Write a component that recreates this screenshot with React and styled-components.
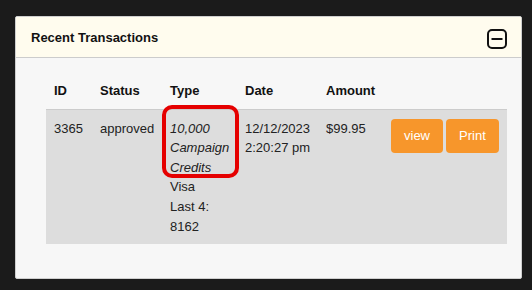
import React from "react";
import styled, { createGlobalStyle } from "styled-components";

const GlobalStyle = createGlobalStyle`
  html, body {
    margin: 0;
    padding: 0;
    background: #1b1b1b;
  }
  body {
    font-family: "Liberation Sans", Arial, sans-serif;
    font-size: 13px;
    color: #222;
  }
`;

const Page = styled.div`
  width: 532px;
  height: 290px;
  padding: 16px 10px 0 15px;
  box-sizing: border-box;
`;

const Panel = styled.section`
  width: 507px;
  height: 263px;
  box-sizing: border-box;
  background: #f7f7f7;
  border: 1px solid #cfcfcf;
  border-radius: 2px;
  overflow: hidden;
`;

const PanelHeader = styled.div`
  height: 40px;
  display: flex;
  align-items: center;
  justify-content: space-between;
  padding: 0 14px 0 15px;
  background: #fffcee;
  border-bottom: 1px solid #cccccc;
`;

const Title = styled.h3`
  margin: 0;
  font-size: 13px;
  font-weight: bold;
  color: #111;
`;

const Toggle = styled.button`
  width: 20px;
  height: 20px;
  margin-top: 4px;
  padding: 0;
  border: none;
  background: none;
  display: flex;
  cursor: pointer;
`;

const PanelBody = styled.div`
  padding: 15px 15px 0 15px;
`;

const Table = styled.table`
  margin-left: 15px;
  border-collapse: collapse;
  table-layout: fixed;
  width: 461px;
  line-height: 19.6px;

  th {
    text-align: left;
    font-weight: bold;
    padding: 8px 8px;
    color: #111;
  }
  td {
    vertical-align: top;
    padding: 9px 8px 8px;
    white-space: nowrap;
  }
  tbody tr {
    background: #dddddd;
    border-top: 1px solid #cccccc;
  }
`;

const Col = styled.col`
  width: ${(p) => p.$width}px;
`;

const Highlight = styled.span`
  position: relative;
  display: block;
  font-style: italic;

  &::after {
    content: "";
    position: absolute;
    top: -14px;
    left: -8px;
    right: -10px;
    bottom: -1px;
    border: 4px solid #e50000;
    border-radius: 10px;
    pointer-events: none;
  }
`;

const Actions = styled.div`
  display: flex;
  gap: 3px;
`;

const Button = styled.button`
  height: 34px;
  padding: 0 13px;
  border: none;
  border-radius: 4px;
  background: #f7962b;
  color: #fff;
  font-family: "Liberation Sans", Arial, sans-serif;
  font-size: 13px;
  cursor: pointer;
`;

const columns = [46, 70, 75, 81, 65, 124];

function MinusSquare() {
  return (
    <svg width="20" height="20" viewBox="0 0 20 20">
      <rect x="1" y="1" width="18" height="18" rx="4" fill="none" stroke="#111" strokeWidth="2" />
      <line x1="4.5" y1="10" x2="15.5" y2="10" stroke="#111" strokeWidth="2" />
    </svg>
  );
}

export default function App() {
  return (
    <Page>
      <GlobalStyle />
      <Panel>
        <PanelHeader>
          <Title>Recent Transactions</Title>
          <Toggle aria-label="collapse">
            <MinusSquare />
          </Toggle>
        </PanelHeader>
        <PanelBody>
          <Table>
            <colgroup>
              {columns.map((w, i) => (
                <Col key={i} $width={w} />
              ))}
            </colgroup>
            <thead>
              <tr>
                <th>ID</th>
                <th>Status</th>
                <th>Type</th>
                <th>Date</th>
                <th>Amount</th>
                <th></th>
              </tr>
            </thead>
            <tbody>
              <tr>
                <td>3365</td>
                <td>approved</td>
                <td>
                  <Highlight>
                    10,000
                    <br />
                    Campaign
                    <br />
                    Credits
                  </Highlight>
                  Visa
                  <br />
                  Last 4:
                  <br />
                  8162
                </td>
                <td>
                  12/12/2023
                  <br />
                  2:20:27 pm
                </td>
                <td>$99.95</td>
                <td>
                  <Actions>
                    <Button>view</Button>
                    <Button>Print</Button>
                  </Actions>
                </td>
              </tr>
            </tbody>
          </Table>
        </PanelBody>
      </Panel>
    </Page>
  );
}
